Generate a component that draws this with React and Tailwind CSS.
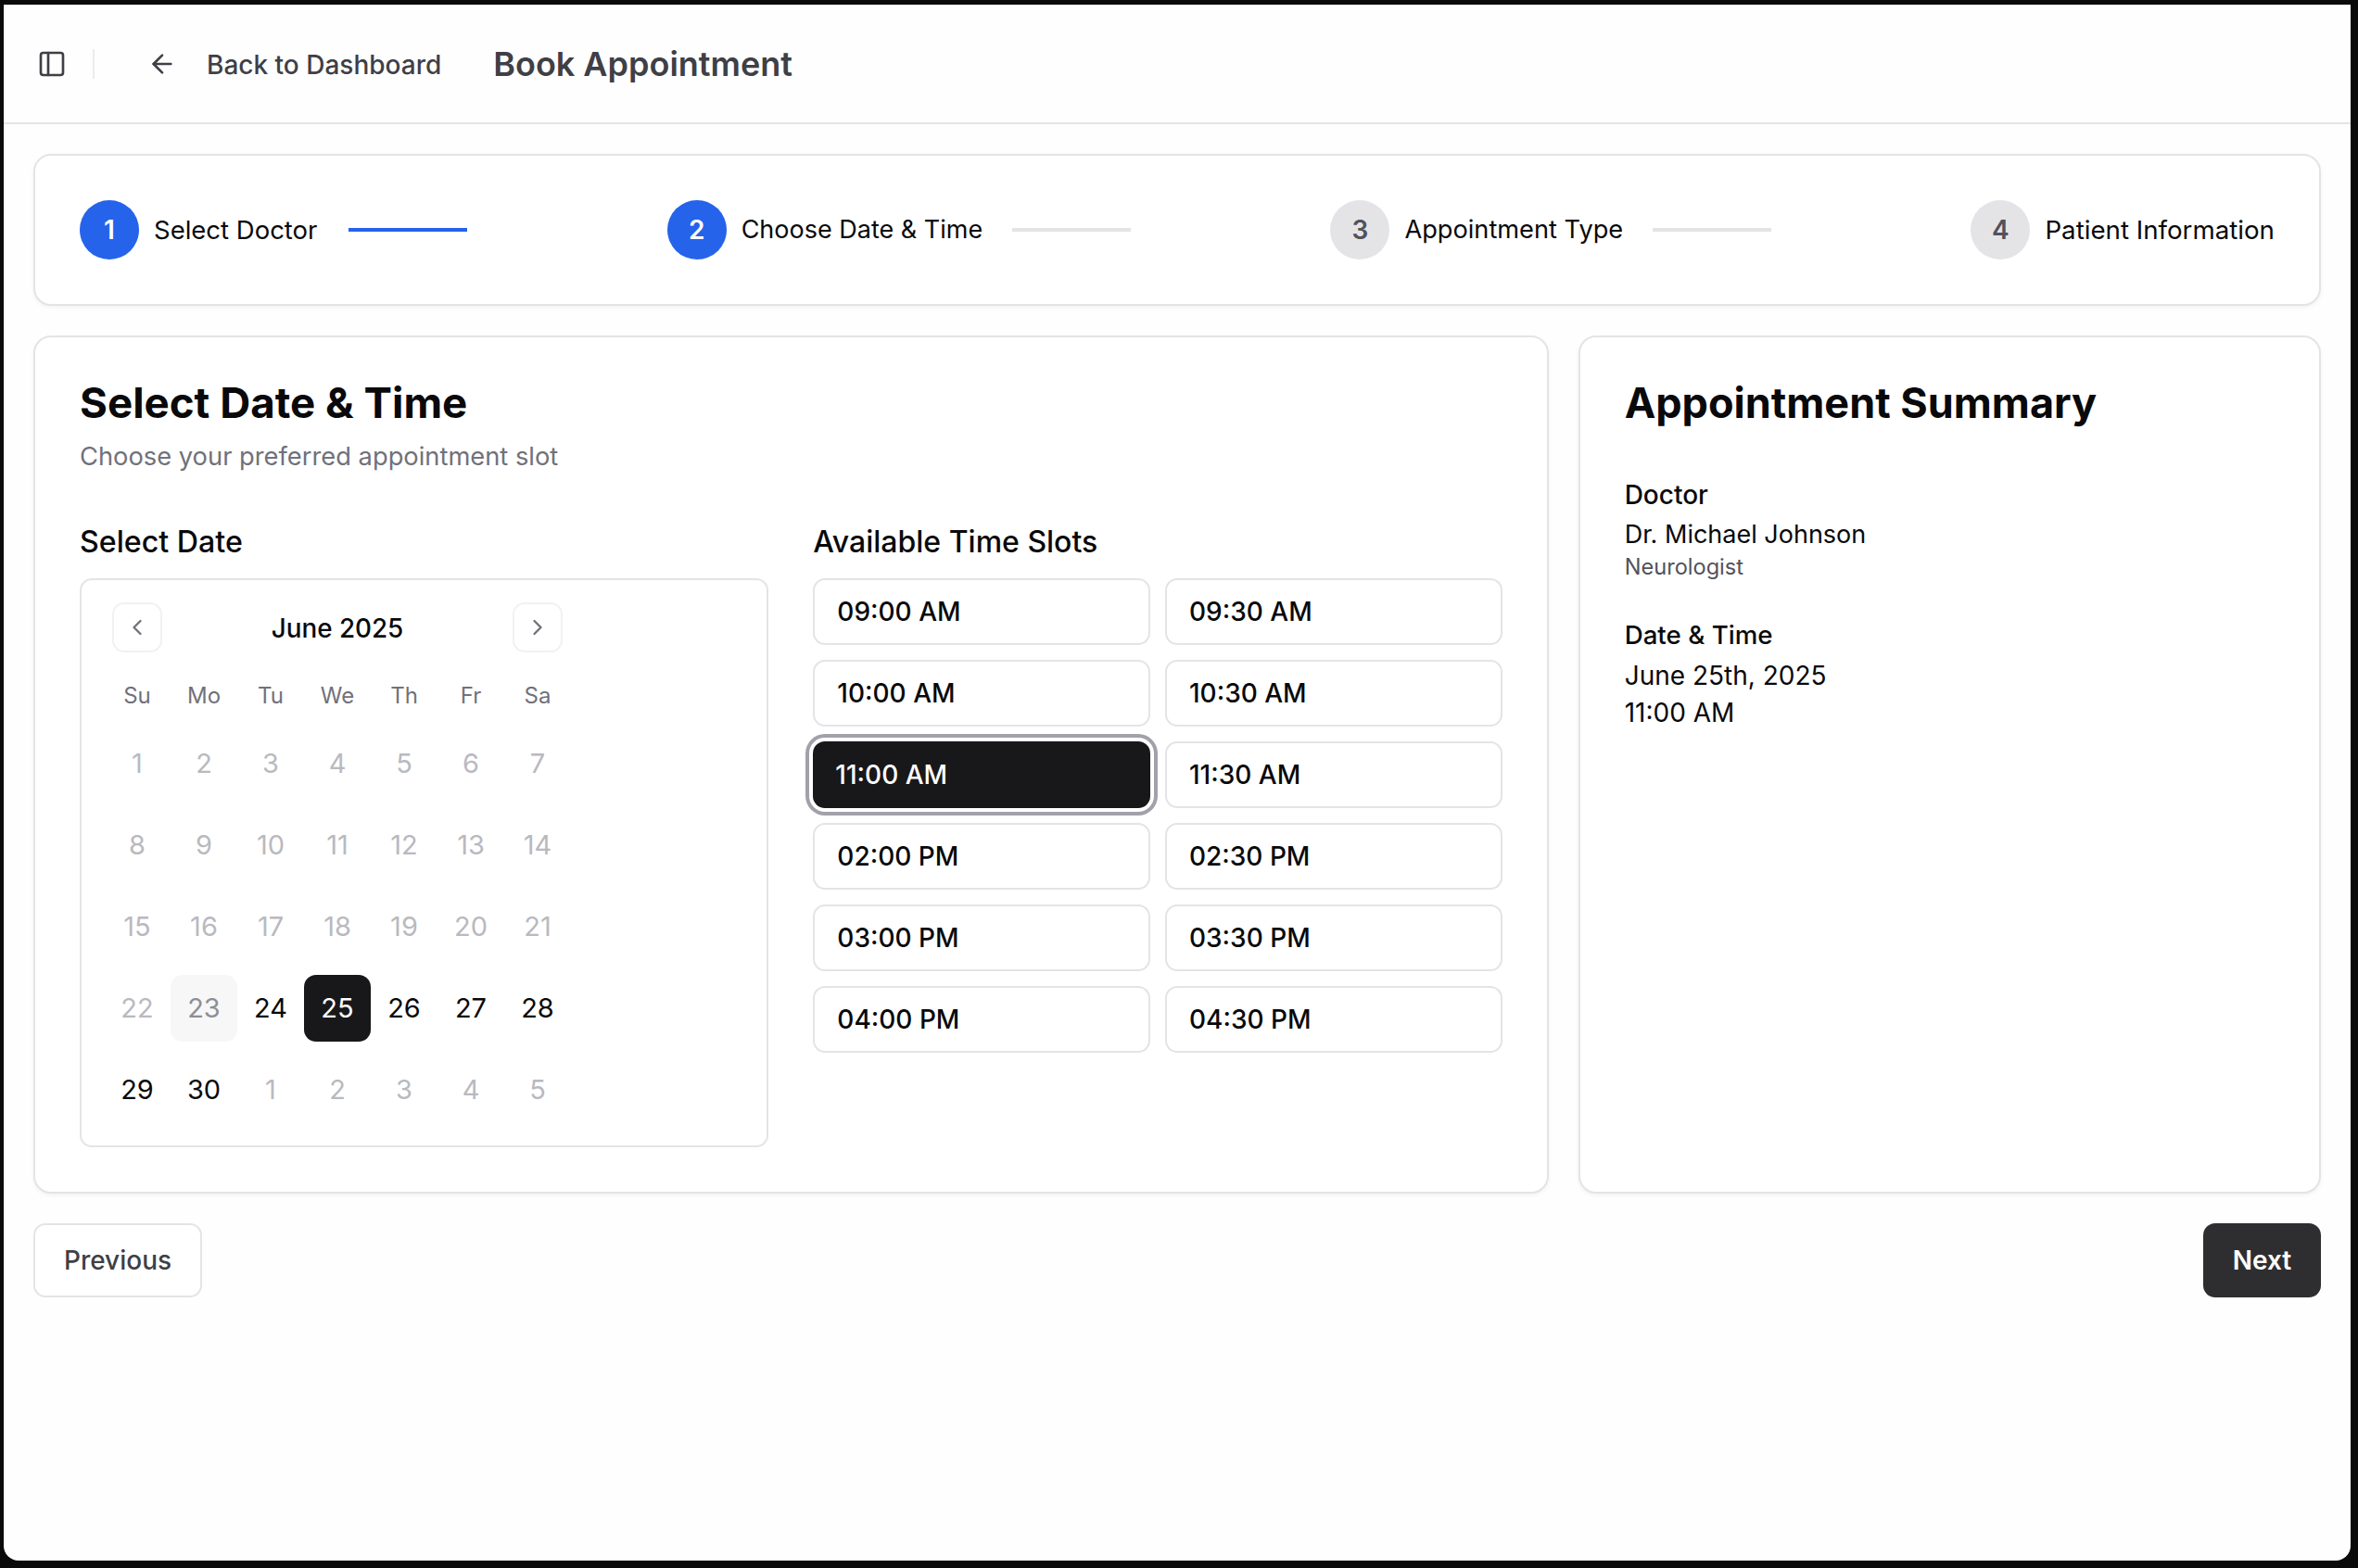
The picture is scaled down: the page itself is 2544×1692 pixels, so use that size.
const Panel = () => (
  <svg width="32" height="32" viewBox="0 0 24 24" fill="none" stroke="#3f3f46" strokeWidth="2" strokeLinecap="round" strokeLinejoin="round">
    <rect x="3" y="3" width="18" height="18" rx="2" />
    <path d="M9 3v18" />
  </svg>
);
const ArrowLeft = () => (
  <svg width="32" height="32" viewBox="0 0 24 24" fill="none" stroke="#3f3f46" strokeWidth="2" strokeLinecap="round" strokeLinejoin="round">
    <path d="m12 19-7-7 7-7" />
    <path d="M19 12H5" />
  </svg>
);
const Chevron = ({ d }) => (
  <svg width="28" height="28" viewBox="0 0 24 24" fill="none" stroke="#71717a" strokeWidth="2" strokeLinecap="round" strokeLinejoin="round">
    <path d={d} />
  </svg>
);

function Step({ n, label, size, gap = "ml-8", active, line, lineActive }) {
  return (
    <div className="flex items-center">
      <div className={`flex h-16 w-16 items-center justify-center rounded-full text-[28px] font-semibold ${active ? "bg-[#2563eb] text-white" : "bg-[#e4e4e7] text-[#52525b]"}`}>{n}</div>
      <span className={`ml-4 leading-10 text-[#09090b] ${size}`}>{label}</span>
      {line && <div className={`h-1 w-32 ${gap} ${lineActive ? "bg-[#2563eb]" : "bg-[#e4e4e7]"}`} />}
    </div>
  );
}

const Card = ({ className = "", children }) => (
  <div className={`rounded-[19px] border-2 border-[#e4e4e7] bg-white shadow-[0_2px_4px_rgba(0,0,0,0.05)] ${className}`}>{children}</div>
);

const weeks = [
  [1, 2, 3, 4, 5, 6, 7],
  [8, 9, 10, 11, 12, 13, 14],
  [15, 16, 17, 18, 19, 20, 21],
  [22, 23, 24, 25, 26, 27, 28],
  [29, 30, 1, 2, 3, 4, 5],
];

function Day({ w, d, i }) {
  const active = (w === 3 && d >= 24) || (w === 4 && i < 2);
  const sel = w === 3 && d === 25;
  const today = w === 3 && d === 23;
  return (
    <div className={`flex h-[72px] w-[72px] items-center justify-center rounded-[13px] text-[29px] ${sel ? "bg-[#18181b] text-white" : today ? "bg-[#f7f7f8] text-[#8e8e94]" : active ? "text-[#09090b]" : "text-[#b9b9bf]"}`}>{d}</div>
  );
}

const slots = ["09:00 AM", "09:30 AM", "10:00 AM", "10:30 AM", "11:00 AM", "11:30 AM", "02:00 PM", "02:30 PM", "03:00 PM", "03:30 PM", "04:00 PM", "04:30 PM"];

export default function App() {
  return (
    <div className="h-[1692px] w-[2544px] bg-[#0a0a0a] pb-2 pl-1 pr-2 pt-[5px] font-['Inter',sans-serif]">
      <div className="h-[1679px] overflow-hidden rounded-b-2xl bg-[#fefefe]">
        <header className="flex h-[129px] items-center border-b-2 border-[#e4e4e7] pl-9">
          <Panel />
          <div className="ml-7 h-8 w-0.5 bg-[#ececee]" />
          <div className="ml-[57px]"><ArrowLeft /></div>
          <span className="ml-8 mt-0.5 text-[28px] font-medium text-[#3f3f46]">Back to Dashboard</span>
          <h1 className="ml-[56px] text-[36px] font-semibold text-[#3f3f46]">Book Appointment</h1>
        </header>
        <main className="px-8 pt-8">
          <Card className="flex items-center justify-between px-12 py-12">
            <Step n={1} label="Select Doctor" size="text-[27.5px]" gap="ml-[34px]" active line lineActive />
            <Step n={2} label="Choose Date & Time" size="text-[27px]" active line />
            <Step n={3} label="Appointment Type" size="text-[27.2px]" line />
            <Step n={4} label="Patient Information" size="text-[27.7px]" />
          </Card>
          <div className="mt-8 grid grid-cols-3 gap-8">
            <Card className="col-span-2 p-12">
              <h2 className="text-[45.7px] font-bold leading-[46px] text-[#09090b]">Select Date &amp; Time</h2>
              <p className="mt-[19px] text-[27.3px] leading-8 text-[#71717a]">Choose your preferred appointment slot</p>
              <div className="mt-14 grid grid-cols-2 gap-12">
                <div>
                  <h3 className="text-[32.2px] font-medium leading-10 text-[#09090b]">Select Date</h3>
                  <div className="mt-[19px] rounded-[13px] border-2 border-[#e4e4e7] p-6">
                    <div className="relative flex h-14 w-[504px] items-center justify-center">
                      <button className="absolute left-[9px] top-0 flex h-[54px] w-[54px] items-center justify-center rounded-[13px] border-2 border-[#f1f1f3]"><Chevron d="m15 18-6-6 6-6" /></button>
                      <span className="mt-0.5 text-[27.8px] font-medium text-[#09090b]">June 2025</span>
                      <button className="absolute right-[9px] top-0 flex h-[54px] w-[54px] items-center justify-center rounded-[13px] border-2 border-[#f1f1f3]"><Chevron d="m9 18 6-6-6-6" /></button>
                    </div>
                    <div className="mt-[27px] grid w-[504px] grid-cols-7 text-center text-[24px] leading-9 text-[#71717a]">
                      {["Su", "Mo", "Tu", "We", "Th", "Fr", "Sa"].map((d) => <div key={d}>{d}</div>)}
                    </div>
                    <div className="mt-[19px] flex w-[504px] flex-col gap-4">
                      {weeks.map((row, w) => (
                        <div key={w} className="flex">
                          {row.map((d, i) => <Day key={i} w={w} d={d} i={i} />)}
                        </div>
                      ))}
                    </div>
                  </div>
                </div>
                <div>
                  <h3 className="text-[32px] font-medium leading-10 text-[#09090b]">Available Time Slots</h3>
                  <div className="mt-[19px] grid grid-cols-2 gap-4">
                    {slots.map((s) => (
                      <button key={s} className={`flex h-[72px] items-center rounded-[13px] px-6 text-left text-[28px] font-medium ${s === "11:00 AM" ? "bg-[#18181b] text-white ring-4 ring-[#a1a1aa] ring-offset-4 ring-offset-white" : "border-2 border-[#e4e4e7] bg-white text-[#09090b]"}`}>{s}</button>
                    ))}
                  </div>
                </div>
              </div>
            </Card>
            <Card className="p-12">
              <h2 className="text-[45px] font-bold leading-[46px] text-[#09090b]">Appointment Summary</h2>
              <div className="mt-[60px] text-[28px] font-medium leading-8 text-[#09090b]">Doctor</div>
              <div className="mt-[11px] text-[27px] leading-8 text-[#09090b]">Dr. Michael Johnson</div>
              <div className="mt-[3px] text-[23.6px] leading-8 text-[#52525b]">Neurologist</div>
              <div className="mt-[41px] text-[27.7px] font-medium leading-8 text-[#09090b]">Date &amp; Time</div>
              <div className="mt-3 text-[28px] leading-8 text-[#09090b]">June 25th, 2025</div>
              <div className="mt-2 text-[28px] leading-8 text-[#09090b]">11:00 AM</div>
            </Card>
          </div>
          <div className="mt-8 flex items-center justify-between">
            <button className="h-20 w-[182px] rounded-[13px] border-2 border-[#e4e4e7] bg-white text-[28px] font-medium text-[#3f3f46]">Previous</button>
            <button className="h-20 w-[127px] rounded-[13px] bg-[#2e2e30] text-[28px] font-semibold text-white">Next</button>
          </div>
        </main>
      </div>
    </div>
  );
}
